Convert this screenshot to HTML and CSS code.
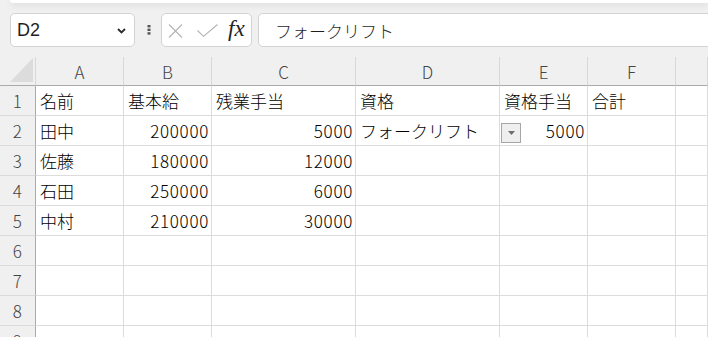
FILE: index.html
```html
<!DOCTYPE html>
<html lang="ja">
<head>
<meta charset="utf-8">
<link rel="stylesheet" href="styles.css">
</head>
<body>
<div class="ribbon-edge"></div>
<div class="toolbar">
  <div class="namebox">
    <span class="namebox-text">D2</span>
    <svg class="chevron" width="9" height="6" viewBox="0 0 9 6"><path d="M1 1 L4.5 4.5 L8 1" fill="none" stroke="#2b2b2b" stroke-width="1.8"/></svg>
  </div>
  <svg class="vdots" width="4" height="10" viewBox="0 0 4 10"><rect x="0.5" y="0" width="3" height="2.4" fill="#555"/><rect x="0.5" y="3.6" width="3" height="2.4" fill="#555"/><rect x="0.5" y="7.2" width="3" height="2.4" fill="#555"/></svg>
  <div class="fxbox">
    <svg class="icon-x" width="15" height="14" viewBox="0 0 15 14"><path d="M1 0.5 L14 13.5 M14 0.5 L1 13.5" stroke="#b4b4b4" stroke-width="1.1" fill="none"/></svg>
    <svg class="icon-check" width="21" height="13" viewBox="0 0 21 13"><path d="M0.5 6.5 L6.5 12.3 L20.5 0.5" stroke="#b4b4b4" stroke-width="1.1" fill="none"/></svg>
    <span class="fx">fx</span>
  </div>
  <div class="formula">フォークリフト</div>
</div>
<div class="sheet">
  <div class="corner"><div class="corner-tri"></div></div>
  <div class="ch">A</div><div class="ch">B</div><div class="ch">C</div><div class="ch">D</div><div class="ch">E</div><div class="ch">F</div><div class="ch"></div>

  <div class="rh">1</div>
  <div class="c">名前</div><div class="c">基本給</div><div class="c">残業手当</div><div class="c">資格</div><div class="c">資格手当</div><div class="c">合計</div><div class="c"></div>

  <div class="rh">2</div>
  <div class="c">田中</div><div class="c num">200000</div><div class="c num">5000</div><div class="c">フォークリフト</div>
  <div class="c num has-dd"><span class="dd"><svg width="7" height="4" viewBox="0 0 7 4"><path d="M0 0 H7 L3.5 4 Z" fill="#6e6e6e"/></svg></span>5000</div>
  <div class="c"></div><div class="c"></div>

  <div class="rh">3</div>
  <div class="c">佐藤</div><div class="c num">180000</div><div class="c num">12000</div><div class="c"></div><div class="c"></div><div class="c"></div><div class="c"></div>

  <div class="rh">4</div>
  <div class="c">石田</div><div class="c num">250000</div><div class="c num">6000</div><div class="c"></div><div class="c"></div><div class="c"></div><div class="c"></div>

  <div class="rh">5</div>
  <div class="c">中村</div><div class="c num">210000</div><div class="c num">30000</div><div class="c"></div><div class="c"></div><div class="c"></div><div class="c"></div>

  <div class="rh">6</div>
  <div class="c"></div><div class="c"></div><div class="c"></div><div class="c"></div><div class="c"></div><div class="c"></div><div class="c"></div>

  <div class="rh">7</div>
  <div class="c"></div><div class="c"></div><div class="c"></div><div class="c"></div><div class="c"></div><div class="c"></div><div class="c"></div>

  <div class="rh">8</div>
  <div class="c"></div><div class="c"></div><div class="c"></div><div class="c"></div><div class="c"></div><div class="c"></div><div class="c"></div>

  <div class="rh">9</div>
  <div class="c"></div><div class="c"></div><div class="c"></div><div class="c"></div><div class="c"></div><div class="c"></div><div class="c"></div>
</div>
</body>
</html>
```
FILE: styles.css
```css
* { box-sizing: border-box; }

html, body {
  margin: 0;
  padding: 0;
  height: 100%;
  overflow: hidden;
}

body {
  background: #f0f0f0;
  font-family: "Noto Sans CJK JP", "Noto Sans", sans-serif;
  font-size: 17px;
  font-weight: 300;
  color: #000;
}

.ribbon-edge {
  height: 3px;
  margin-left: 10px;
  background: #fff;
  border-bottom-left-radius: 8px;
  box-shadow: 0 2px 6px rgba(0, 0, 0, 0.12);
}

.toolbar {
  display: flex;
  align-items: center;
  height: 34px;
  margin: 10px 0 10px 10px;
}

.namebox {
  width: 125px;
  height: 34px;
  background: #fff;
  border: 1px solid #d3d3d3;
  border-radius: 5px;
  display: flex;
  align-items: center;
  justify-content: space-between;
  padding: 0 8px 0 6px;
}

.namebox-text {
  font-family: "Liberation Sans", Arial, sans-serif;
  font-weight: 400;
  font-size: 18px;
  color: #1f1f1f;
}

.chevron { margin-top: 1px; }

.vdots {
  margin: 0 10px 0 12px;
}

.fxbox {
  width: 91px;
  height: 34px;
  background: #fff;
  border: 1px solid #d3d3d3;
  border-radius: 5px;
  display: flex;
  align-items: center;
  padding-left: 6px;
}

.icon-x { margin-top: 1px; }

.icon-check {
  margin-left: 14px;
}

.fx {
  margin-left: 10px;
  font-family: "Liberation Serif", "Times New Roman", serif;
  font-style: italic;
  font-weight: 400;
  font-size: 23px;
  color: #222;
  line-height: 1;
  margin-top: -3px;
}

.formula {
  flex: 1;
  height: 34px;
  margin-left: 6px;
  margin-right: -12px;
  background: #fff;
  border: 1px solid #d3d3d3;
  border-radius: 5px;
  display: flex;
  align-items: center;
  padding-left: 16px;
  color: #1f1f1f;
  font-size: 17px;
}

.sheet {
  display: grid;
  grid-template-columns: 36px 88px 88px 144px 144px 88px 88px 1fr;
  grid-template-rows: 29px repeat(9, 30px);
  background: #fff;
}

.corner {
  background: #f0f0f0;
  border-right: 1px solid #d8d8d8;
  border-bottom: 1px solid #ababab;
  display: flex;
  align-items: flex-end;
  justify-content: flex-end;
  padding: 0 2px 3px 0;
}

.corner-tri {
  width: 23px;
  height: 24px;
  background: #dcdcdc;
  clip-path: polygon(100% 0, 100% 100%, 0 100%);
}

.ch {
  background: #f0f0f0;
  border-right: 1px solid #d8d8d8;
  border-bottom: 1px solid #ababab;
  display: flex;
  align-items: center;
  justify-content: center;
  color: #444;
  font-size: 17px;
}

.rh {
  background: #f0f0f0;
  border-right: 1px solid #ababab;
  border-bottom: 1px solid #dadada;
  display: flex;
  align-items: center;
  justify-content: center;
  color: #444;
  font-size: 17px;
  letter-spacing: 0.5px;
}

.c {
  border-right: 1px solid #dcdcdc;
  border-bottom: 1px solid #dcdcdc;
  display: flex;
  align-items: center;
  padding: 0 3px 0 4px;
  white-space: nowrap;
  overflow: visible;
}

.num {
  justify-content: flex-end;
  letter-spacing: 0.7px;
  padding-right: 2px;
}

.has-dd {
  position: relative;
}

.dd {
  position: absolute;
  left: 1px;
  top: 7px;
  width: 20px;
  height: 20px;
  background: #efefef;
  border: 1px solid #a6a6a6;
  display: flex;
  align-items: center;
  justify-content: center;
}

.dd svg { margin-top: -1px; }
```
